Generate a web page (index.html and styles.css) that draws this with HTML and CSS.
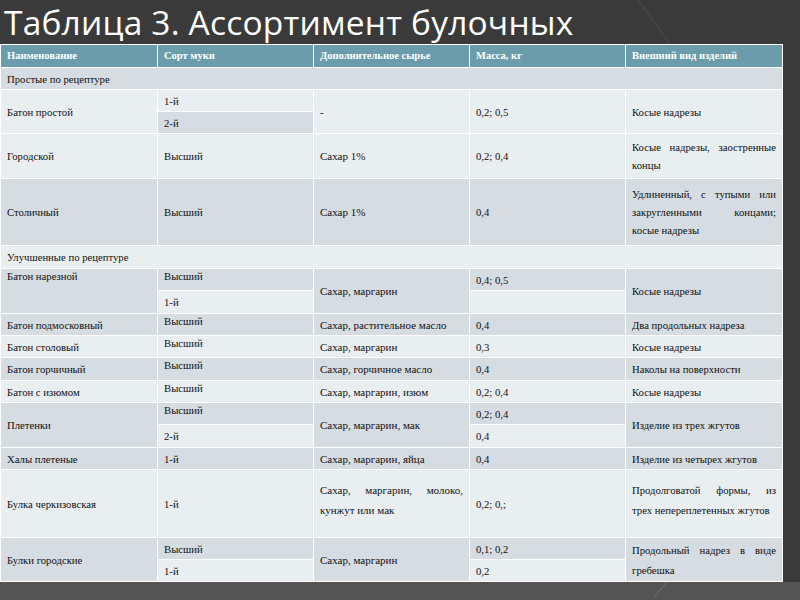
FILE: index.html
```html
<!DOCTYPE html>
<html lang="ru">
<head>
<meta charset="utf-8">
<title>Таблица 3</title>
<link rel="stylesheet" href="styles.css">
</head>
<body>
<div class="slide">
  <div class="deco-line"></div>
  <div class="deco-bottom"></div>
  <h1 class="title">Таблица 3. Ассортимент булочных</h1>
  <table class="grid">
    <colgroup><col class="c1"><col class="c2"><col class="c3"><col class="c4"><col class="c5"></colgroup>
    <thead>
      <tr class="h23"><th>Наименование</th><th>Сорт муки</th><th>Дополнительное сырье</th><th>Масса, кг</th><th>Внешний вид изделий</th></tr>
    </thead>
    <tbody>
      <tr class="dark h22"><td colspan="5">Простые по рецептуре</td></tr>
      <tr class="light h22"><td rowspan="2">Батон простой</td><td>1-й</td><td rowspan="2" class="c3t">-</td><td rowspan="2">0,2; 0,5</td><td rowspan="2">Косые надрезы</td></tr>
      <tr class="dark h22"><td>2-й</td></tr>
      <tr class="light h45"><td>Городской</td><td>Высший</td><td class="c3t">Сахар 1%</td><td>0,2; 0,4</td><td><span class="ln">Косые надрезы, заостренные</span><span class="ll">концы</span></td></tr>
      <tr class="dark h67"><td>Столичный</td><td>Высший</td><td class="c3t">Сахар 1%</td><td>0,4</td><td><span class="ln">Удлиненный, с тупыми или</span><span class="ln">закругленными концами;</span><span class="ll">косые надрезы</span></td></tr>
      <tr class="light h23"><td colspan="5">Улучшенные по рецептуре</td></tr>
      <tr class="dark h22"><td rowspan="2" class="top">Батон нарезной</td><td class="top">Высший</td><td rowspan="2" class="c3t">Сахар, маргарин</td><td>0,4; 0,5</td><td rowspan="2">Косые надрезы</td></tr>
      <tr class="light h23"><td>1-й</td><td></td></tr>
      <tr class="dark h22"><td>Батон подмосковный</td><td class="top">Высший</td><td class="c3t">Сахар, растительное масло</td><td>0,4</td><td>Два продольных надреза</td></tr>
      <tr class="light h22"><td>Батон столовый</td><td class="top">Высший</td><td class="c3t">Сахар, маргарин</td><td>0,3</td><td>Косые надрезы</td></tr>
      <tr class="dark h23"><td>Батон горчичный</td><td class="top">Высший</td><td class="c3t">Сахар, горчичное масло</td><td>0,4</td><td>Наколы на поверхности</td></tr>
      <tr class="light h22"><td>Батон с изюмом</td><td class="top">Высший</td><td class="c3t">Сахар, маргарин, изюм</td><td>0,2; 0,4</td><td>Косые надрезы</td></tr>
      <tr class="dark h22"><td rowspan="2">Плетенки</td><td class="top">Высший</td><td rowspan="2" class="c3t">Сахар, маргарин, мак</td><td>0,2; 0,4</td><td rowspan="2">Изделие из трех жгутов</td></tr>
      <tr class="light h23"><td>2-й</td><td>0,4</td></tr>
      <tr class="dark h22"><td>Халы плетеные</td><td>1-й</td><td class="c3t">Сахар, маргарин, яйца</td><td>0,4</td><td>Изделие из четырех жгутов</td></tr>
      <tr class="light h68"><td>Булка черкизовская</td><td>1-й</td><td class="c3t wide"><span class="ln">Сахар, маргарин, молоко,</span><span class="ll">кунжут или мак</span></td><td>0,2; 0,;</td><td class="wide"><span class="ln">Продолговатой формы, из</span><span class="ll">трех непереплетенных жгутов</span></td></tr>
      <tr class="dark h22"><td rowspan="2">Булки городские</td><td>Высший</td><td rowspan="2" class="c3t">Сахар, маргарин</td><td>0,1; 0,2</td><td rowspan="2" class="wide2"><span class="ln">Продольный надрез в виде</span><span class="ll">гребешка</span></td></tr>
      <tr class="light h22"><td>1-й</td><td>0,2</td></tr>
    </tbody>
  </table>
</div>
</body>
</html>
```

FILE: styles.css
```css
html, body {
  margin: 0;
  padding: 0;
}
body {
  background: #3a3a3a;
  width: 800px;
  height: 600px;
  overflow: hidden;
}
.slide {
  position: relative;
  width: 800px;
  height: 600px;
  background: linear-gradient(180deg, #3a3a3a 0, #3a3a3a 582px, #545454 582px);
}
.deco-line {
  position: absolute;
  left: 636px;
  top: -2px;
  width: 1px;
  height: 60px;
  background: #4a4a4a;
  transform: rotate(-36deg);
  transform-origin: top left;
}
.deco-bottom {
  position: absolute;
  left: 668px;
  top: 580px;
  width: 1px;
  height: 24px;
  background: #6a6a6a;
  transform: rotate(40deg);
  transform-origin: top left;
}
.title {
  margin: 0;
  height: 44px;
  padding-left: 4px;
  font-family: "Open Sans", "DejaVu Sans", sans-serif;
  font-weight: 400;
  font-size: 33.5px;
  line-height: 44px;
  color: #ffffff;
  letter-spacing: 0.2px;
  position: relative;
}
.grid {
  position: relative;
  border-collapse: collapse;
  width: 782px;
  table-layout: fixed;
  font-family: "Liberation Serif", "Times New Roman", serif;
  font-size: 10.7px;
  color: #111;
}
.c1 { width: 157px; }
.c2 { width: 156px; }
.c3 { width: 156px; }
.c4 { width: 156px; }
.c5 { width: 157px; }
.grid th, .grid td {
  border: 1px solid #ffffff;
  padding: 0 6px;
  text-align: left;
  vertical-align: middle;
  line-height: 18px;
  white-space: nowrap;
  overflow: hidden;
}
.grid th {
  background: #6b9cab;
  color: #ffffff;
  font-weight: bold;
  font-size: 10.5px;
}
.grid tr.dark td { background: #d5dce2; }
.grid tr.light td { background: #e9eef1; }
.h22 { height: 22px; }
.h23 { height: 23px; }
.h45 { height: 45px; }
.h67 { height: 67px; }
.h68 { height: 68px; }
.grid td.top { vertical-align: top; line-height: 14px; }
.grid td.c3t {
  font-size: 11px;
}
.ln {
  display: block;
  text-align: justify;
  text-align-last: justify;
}
.ll {
  display: block;
  text-align: left;
}
.grid td.wide { line-height: 20px; padding-bottom: 8px; }
.grid td.wide2 { line-height: 20px; }
```
